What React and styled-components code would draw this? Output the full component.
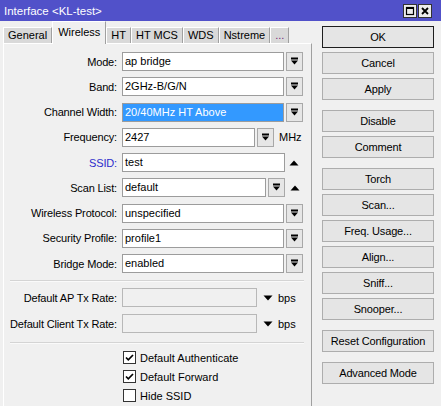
import React from 'react';
import styled, { createGlobalStyle } from 'styled-components';

const Global = createGlobalStyle`
  html, body { margin: 0; padding: 0; background: #f0f0f0; }
  body {
    font-family: "Liberation Sans", Arial, sans-serif;
    font-size: 11px;
    color: #000;
  }
`;

const Window = styled.div`
  width: 441px;
  height: 406px;
  overflow: hidden;
  background: #f0f0f0;
  display: flex;
  flex-direction: column;
`;

const TitleBar = styled.div`
  flex: none;
  height: 21px;
  box-sizing: border-box;
  background: #5151c9;
  color: #fff;
  display: flex;
  align-items: center;
  padding: 0 9px 0 4px;
  font-size: 11.5px;
`;

const Title = styled.div`
  flex: 1;
`;

const TitleButtons = styled.div`
  display: flex;
  gap: 1px;
`;

const TitleBtn = styled.div`
  width: 14px;
  height: 14px;
  box-sizing: border-box;
  border: 1px solid #333;
  background: #ececec;
  display: flex;
  align-items: center;
  justify-content: center;
`;

const Body = styled.div`
  flex: 1;
  min-height: 0;
  display: flex;
`;

const LeftCol = styled.div`
  width: 309px;
  margin-left: 3px;
  display: flex;
  flex-direction: column;
`;

const TabRow = styled.div`
  flex: none;
  height: 22px;
  display: flex;
  align-items: flex-end;
  position: relative;
  z-index: 1;
`;

const Tab = styled.div`
  box-sizing: border-box;
  height: ${p => (p.$active ? '23px' : '16px')};
  margin-bottom: ${p => (p.$active ? '-1px' : '0')};
  padding: ${p => (p.$active ? '4px 5px 0' : '1px 4px 0')};
  background: ${p => (p.$active ? '#f0f0f0' : '#d9d9d9')};
  border-top: 1px solid #fff;
  border-left: 1px solid #fff;
  border-right: 1px solid #a0a0a0;
  color: ${p => p.$color || '#000'};
  white-space: nowrap;
  line-height: 13px;
  font-size: 11px;
`;

const Panel = styled.div`
  flex: 1;
  min-height: 0;
  box-sizing: border-box;
  border-top: 1px solid #fff;
  border-left: 1px solid #fff;
  border-right: 1px solid #a0a0a0;
  padding-top: 8px;
  display: flex;
  flex-direction: column;
`;

const Group = styled.div`
  display: flex;
  flex-direction: column;
  gap: ${p => p.$gap};
`;

const Row = styled.div`
  display: flex;
  align-items: center;
  height: 19px;
`;

const Label = styled.div`
  width: 113px;
  margin-right: 5px;
  text-align: right;
  white-space: nowrap;
  letter-spacing: -0.15px;
  color: ${p => p.$color || '#000'};
`;

const Input = styled.div`
  box-sizing: border-box;
  width: ${p => p.$w}px;
  height: 19px;
  border: 1px solid ${p => (p.$disabled ? '#b8b8b8' : '#9c9c9c')};
  background: ${p => (p.$selected ? '#3399ff' : p.$disabled ? '#f0f0f0' : '#fff')};
  color: ${p => (p.$selected ? '#fff' : '#000')};
  padding-left: 2px;
  line-height: 17px;
  white-space: nowrap;
  overflow: hidden;
`;

const DropBtn = styled.div`
  box-sizing: border-box;
  width: 17px;
  height: 19px;
  margin-left: 2px;
  border: 1px solid #a8a8a8;
  background: #e6e6e6;
  display: flex;
  align-items: center;
  justify-content: center;
`;

const Arrow = styled.div`
  margin-left: ${p => p.$ml || 5}px;
  display: flex;
  align-items: center;
`;

const Suffix = styled.span`
  margin-left: ${p => p.$ml || 4}px;
`;

const Separator = styled.div`
  height: 1px;
  background: #d4d4d4;
  border-bottom: 1px solid #fafafa;
  margin: ${p => p.$m};
  margin-left: 6px;
  margin-right: 7px;
`;

const CheckRow = styled.div`
  display: flex;
  align-items: center;
  height: 13px;
  margin-left: 119px;
  gap: 4px;
`;

const CheckBox = styled.div`
  box-sizing: border-box;
  width: 13px;
  height: 13px;
  border: 1px solid #333;
  background: #fff;
  display: flex;
  align-items: center;
  justify-content: center;
`;

const RightCol = styled.div`
  width: 112px;
  margin-left: 10px;
  padding-top: 5px;
  display: flex;
  flex-direction: column;
  gap: 10px;
`;

const BtnGroup = styled.div`
  display: flex;
  flex-direction: column;
  gap: 4px;
`;

const Button = styled.div`
  box-sizing: border-box;
  height: 22px;
  border: 1px solid ${p => (p.$default ? '#1e1e1e' : '#adadad')};
  background: #e5e5e5;
  display: flex;
  align-items: center;
  justify-content: center;
  letter-spacing: -0.15px;
  white-space: nowrap;
`;

const DropIcon = () => (
  <svg width="9" height="9" viewBox="0 0 9 9">
    <rect x="1" y="0.5" width="7" height="2" fill="#000" />
    <path d="M1 3.5h7L4.5 7.5z" fill="#000" />
  </svg>
);

const UpTri = () => (
  <svg width="10" height="6" viewBox="0 0 10 6">
    <path d="M0.5 5.5L5 0.5L9.5 5.5z" fill="#000" />
  </svg>
);

const DownTri = () => (
  <svg width="10" height="6" viewBox="0 0 10 6">
    <path d="M0.5 0.5H9.5L5 5.5z" fill="#000" />
  </svg>
);

const Check = () => (
  <svg width="11" height="11" viewBox="0 0 11 11">
    <path d="M2 5.5L4.3 7.8L9 3" stroke="#000" strokeWidth="1.7" fill="none" />
  </svg>
);

const tabs = [
  { t: 'General' },
  { t: 'Wireless', active: true },
  { t: 'HT' },
  { t: 'HT MCS' },
  { t: 'WDS' },
  { t: 'Nstreme' },
  { t: '...', color: '#6e2a78' },
];

const selectRows = [
  { label: 'Mode:', value: 'ap bridge' },
  { label: 'Band:', value: '2GHz-B/G/N' },
  { label: 'Channel Width:', value: '20/40MHz HT Above', selected: true },
];

const lowerRows = [
  { label: 'Wireless Protocol:', value: 'unspecified' },
  { label: 'Security Profile:', value: 'profile1' },
  { label: 'Bridge Mode:', value: 'enabled' },
];

const buttonGroups = [
  [{ t: 'OK', def: true }, { t: 'Cancel' }, { t: 'Apply' }],
  [{ t: 'Disable' }, { t: 'Comment' }],
  [{ t: 'Torch' }, { t: 'Scan...' }, { t: 'Freq. Usage...' }, { t: 'Align...' }, { t: 'Sniff...' }, { t: 'Snooper...' }],
  [{ t: 'Reset Configuration' }],
  [{ t: 'Advanced Mode' }],
];

const checks = [
  { t: 'Default Authenticate', on: true },
  { t: 'Default Forward', on: true },
  { t: 'Hide SSID', on: false },
];

export default function App() {
  return (
    <>
      <Global />
      <Window>
        <TitleBar>
          <Title>Interface &lt;KL-test&gt;</Title>
          <TitleButtons>
            <TitleBtn>
              <svg width="10" height="10" viewBox="0 0 10 10">
                <rect x="1.5" y="1.5" width="7" height="7" fill="none" stroke="#000" strokeWidth="1.2" />
                <rect x="1.5" y="1.5" width="7" height="1.5" fill="#000" />
              </svg>
            </TitleBtn>
            <TitleBtn>
              <svg width="10" height="10" viewBox="0 0 10 10">
                <path d="M2 2L8 8M8 2L2 8" stroke="#000" strokeWidth="1.8" />
              </svg>
            </TitleBtn>
          </TitleButtons>
        </TitleBar>
        <Body>
          <LeftCol>
            <TabRow>
              {tabs.map(tb => (
                <Tab key={tb.t} $active={tb.active} $color={tb.color}>{tb.t}</Tab>
              ))}
            </TabRow>
            <Panel>
              <Group $gap="6.25px">
                {selectRows.map(r => (
                  <Row key={r.label}>
                    <Label>{r.label}</Label>
                    <Input $w={162} $selected={r.selected}>{r.value}</Input>
                    <DropBtn><DropIcon /></DropBtn>
                  </Row>
                ))}
                <Row>
                  <Label>Frequency:</Label>
                  <Input $w={133}>2427</Input>
                  <DropBtn><DropIcon /></DropBtn>
                  <Suffix $ml={5}>MHz</Suffix>
                </Row>
                <Row>
                  <Label $color="#2d2dcc">SSID:</Label>
                  <Input $w={163}>test</Input>
                  <Arrow $ml={4}><UpTri /></Arrow>
                </Row>
                <Row>
                  <Label>Scan List:</Label>
                  <Input $w={144}>default</Input>
                  <DropBtn><DropIcon /></DropBtn>
                  <Arrow $ml={5}><UpTri /></Arrow>
                </Row>
                {lowerRows.map(r => (
                  <Row key={r.label}>
                    <Label>{r.label}</Label>
                    <Input $w={162}>{r.value}</Input>
                    <DropBtn><DropIcon /></DropBtn>
                  </Row>
                ))}
              </Group>
              <Separator $m="7px 0 6px" />
              <Group $gap="7px">
                <Row>
                  <Label>Default AP Tx Rate:</Label>
                  <Input $w={135} $disabled />
                  <Arrow $ml={6}><DownTri /></Arrow>
                  <Suffix $ml={5}>bps</Suffix>
                </Row>
                <Row>
                  <Label>Default Client Tx Rate:</Label>
                  <Input $w={135} $disabled />
                  <Arrow $ml={6}><DownTri /></Arrow>
                  <Suffix $ml={5}>bps</Suffix>
                </Row>
              </Group>
              <Separator $m="9px 0 7px" />
              <Group $gap="6px">
                {checks.map(c => (
                  <CheckRow key={c.t}>
                    <CheckBox>{c.on && <Check />}</CheckBox>
                    <span>{c.t}</span>
                  </CheckRow>
                ))}
              </Group>
            </Panel>
          </LeftCol>
          <RightCol>
            {buttonGroups.map((g, i) => (
              <BtnGroup key={i}>
                {g.map(b => (
                  <Button key={b.t} $default={b.def}>{b.t}</Button>
                ))}
              </BtnGroup>
            ))}
          </RightCol>
        </Body>
      </Window>
    </>
  );
}
